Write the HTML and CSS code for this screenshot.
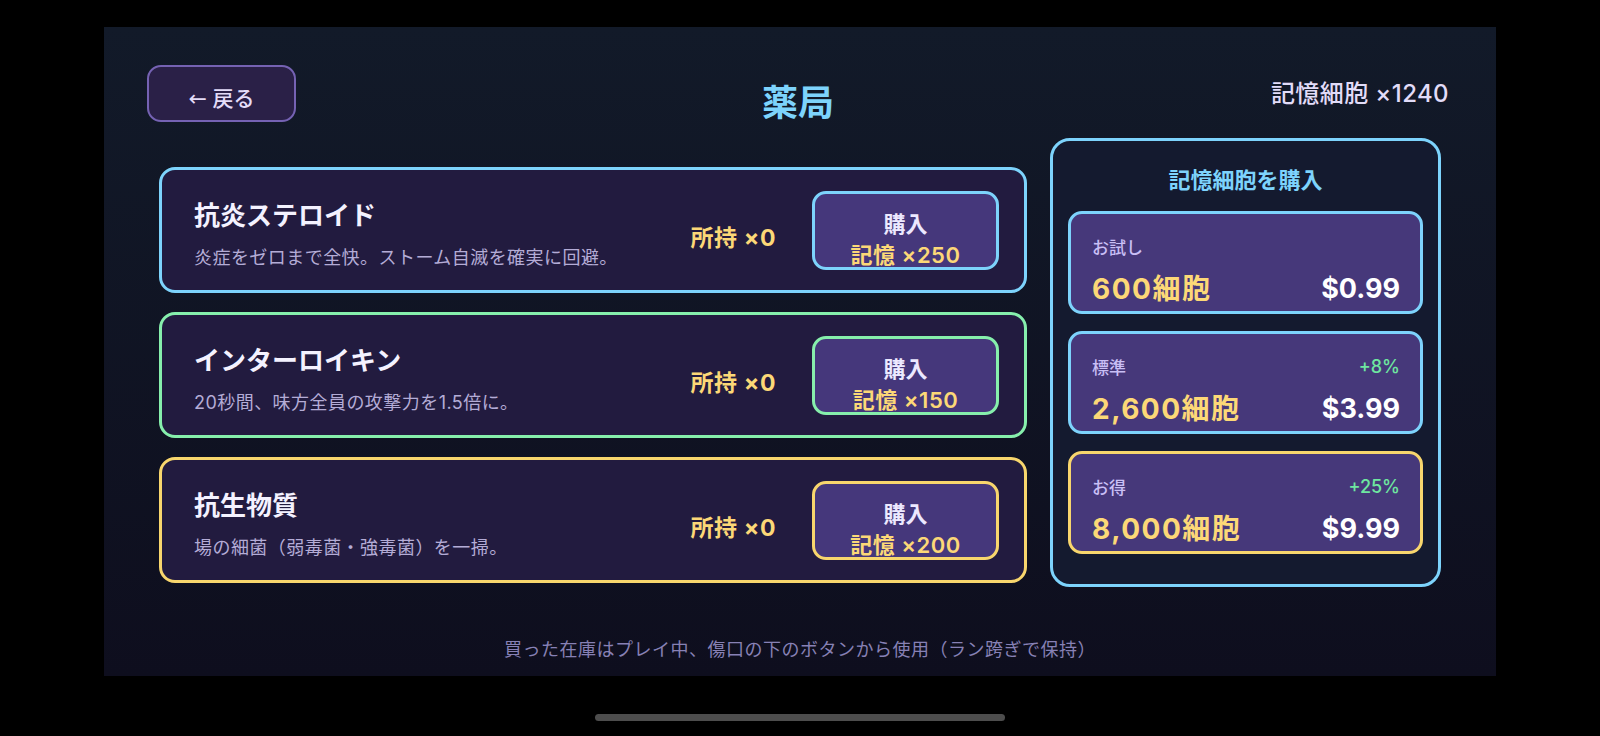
FILE: index.html
```html
<!DOCTYPE html>
<html lang="ja">
<head>
    <meta charset="UTF-8">
    <title>薬局</title>
    <link rel="stylesheet" href="styles.css">
</head>
<body>
    <div class="screen">
        <header class="top">
            <button class="back"><span class="arrow">←</span> 戻る</button>
            <h1 class="title">薬局</h1>
            <div class="wallet">記憶細胞 ×1240</div>
        </header>

        <main class="shop">
            <section class="items">
                <div class="item blue">
                    <div class="info">
                        <h3>抗炎ステロイド</h3>
                        <p>炎症をゼロまで全快。ストーム自滅を確実に回避。</p>
                    </div>
                    <div class="owned">所持 ×0</div>
                    <button class="buy">
                        <span class="buy-label">購入</span>
                        <span class="buy-cost">記憶 ×250</span>
                    </button>
                </div>
                <div class="item green">
                    <div class="info">
                        <h3>インターロイキン</h3>
                        <p>20秒間、味方全員の攻撃力を1.5倍に。</p>
                    </div>
                    <div class="owned">所持 ×0</div>
                    <button class="buy">
                        <span class="buy-label">購入</span>
                        <span class="buy-cost">記憶 ×150</span>
                    </button>
                </div>
                <div class="item gold">
                    <div class="info">
                        <h3>抗生物質</h3>
                        <p>場の細菌（弱毒菌・強毒菌）を一掃。</p>
                    </div>
                    <div class="owned">所持 ×0</div>
                    <button class="buy">
                        <span class="buy-label">購入</span>
                        <span class="buy-cost">記憶 ×200</span>
                    </button>
                </div>
            </section>

            <aside class="store">
                <h2>記憶細胞を購入</h2>
                <div class="pack">
                    <div class="pack-row">
                        <span class="pack-name">お試し</span>
                    </div>
                    <div class="pack-row">
                        <span class="amount">600細胞</span>
                        <span class="price">$0.99</span>
                    </div>
                </div>
                <div class="pack">
                    <div class="pack-row">
                        <span class="pack-name">標準</span>
                        <span class="bonus">+8%</span>
                    </div>
                    <div class="pack-row">
                        <span class="amount">2,600細胞</span>
                        <span class="price">$3.99</span>
                    </div>
                </div>
                <div class="pack best">
                    <div class="pack-row">
                        <span class="pack-name">お得</span>
                        <span class="bonus">+25%</span>
                    </div>
                    <div class="pack-row">
                        <span class="amount">8,000細胞</span>
                        <span class="price">$9.99</span>
                    </div>
                </div>
            </aside>
        </main>

        <p class="hint">買った在庫はプレイ中、傷口の下のボタンから使用（ラン跨ぎで保持）</p>
    </div>
    <div class="home-bar"></div>
</body>
</html>
```

FILE: styles.css
```css
body {
    margin: 0;
    height: 736px;
    overflow: hidden;
    background: #000;
    font-family: Inter, "Noto Sans CJK JP", sans-serif;
    color: #ece8ff;
}
.screen {
    box-sizing: border-box;
    width: 1392px;
    height: 649px;
    margin: 27px 0 0 104px;
    background: linear-gradient(#121a29, #0e0e1e);
}
.top {
    display: grid;
    grid-template-columns: 1fr auto 1fr;
    align-items: center;
    padding: 36px 47px 0 43px;
    height: 57px;
}
.back {
    width: 149px;
    height: 57px;
    padding: 8px 0 0;
    border: 2px solid #7562b3;
    border-radius: 14px;
    background: #2a2047;
    color: #e4dcf8;
    font-family: inherit;
    font-size: 21px;
    font-weight: 500;
}
.arrow {
    font-family: "DejaVu Sans", sans-serif;
    font-weight: 400;
    font-size: 22px;
}
.title {
    margin: 0;
    padding-top: 20px;
    font-size: 36px;
    line-height: 40px;
    font-weight: 700;
    color: #7dd3fc;
}
.wallet {
    justify-self: end;
    margin-top: -4px;
    font-size: 24px;
    font-weight: 500;
    letter-spacing: 0.4px;
    color: #e2dcf8;
}
.shop {
    display: flex;
    gap: 23px;
    margin-top: 18px;
    padding: 0 55px;
}
.items {
    display: flex;
    flex-direction: column;
    gap: 19px;
    width: 868px;
    margin-top: 29px;
}
.item {
    box-sizing: border-box;
    display: flex;
    align-items: center;
    height: 126px;
    padding: 0 25px 0 32px;
    border: 3px solid;
    border-radius: 16px;
    background: #221b3f;
}
.item.blue { border-color: #7dd3fc; }
.item.green { border-color: #86efac; }
.item.gold { border-color: #f8d66d; }
.info {
    flex: 1;
    margin-top: 10px;
}
.info h3 {
    margin: 0;
    font-size: 26px;
    line-height: 34px;
    font-weight: 700;
    color: #f4f2ff;
}
.info p {
    margin: 12px 0 0;
    font-size: 18px;
    line-height: 26px;
    letter-spacing: 0.45px;
    color: #b4acd6;
}
.owned {
    margin: 12px 36px 0 0;
    font-size: 23px;
    font-weight: 700;
    letter-spacing: 0.6px;
    color: #fcd877;
}
.buy {
    box-sizing: border-box;
    display: flex;
    flex-direction: column;
    align-items: center;
    width: 187px;
    height: 79px;
    padding: 15px 0 0;
    border: 3px solid;
    border-radius: 14px;
    background: #45377b;
    font-family: inherit;
    font-size: 22px;
    font-weight: 600;
    line-height: 31px;
}
.blue .buy { border-color: #7dd3fc; }
.green .buy { border-color: #86efac; }
.gold .buy { border-color: #f8d66d; }
.buy-label { color: #ece8ff; }
.buy-cost {
    color: #fcd877;
    letter-spacing: 0.5px;
}
.store {
    box-sizing: border-box;
    width: 391px;
    height: 449px;
    padding: 0 15px;
    border: 3px solid #7dd3fc;
    border-radius: 20px;
    background: #141a2f;
}
.store h2 {
    margin: 26px 0 18px;
    text-align: center;
    font-size: 22px;
    line-height: 26px;
    font-weight: 700;
    color: #7dd3fc;
}
.pack {
    box-sizing: border-box;
    height: 103px;
    margin-bottom: 17px;
    padding: 20px 20px 0 21px;
    border: 3px solid #7dd3fc;
    border-radius: 14px;
    background: #46387a;
}
.pack.best { border-color: #f8d66d; }
.pack-row {
    display: flex;
    justify-content: space-between;
    align-items: center;
    height: 24px;
}
.pack-row + .pack-row {
    height: 36px;
    margin-top: 12px;
}
.pack-name {
    font-size: 17px;
    font-weight: 500;
    color: #c9bff5;
}
.bonus {
    font-size: 18px;
    font-weight: 500;
    color: #6ee7a0;
}
.amount {
    margin-top: -3px;
    font-size: 28px;
    font-weight: 700;
    letter-spacing: 1.5px;
    color: #fcd877;
}
.price {
    font-size: 27px;
    font-weight: 700;
    color: #fff;
}
.hint {
    margin: 50px 0 0;
    text-align: center;
    font-size: 18px;
    line-height: 26px;
    letter-spacing: 0.5px;
    color: #8781b5;
}
.home-bar {
    width: 410px;
    height: 7px;
    margin: 38px 0 0 595px;
    border-radius: 4px;
    background: #4d4d4d;
}
```
